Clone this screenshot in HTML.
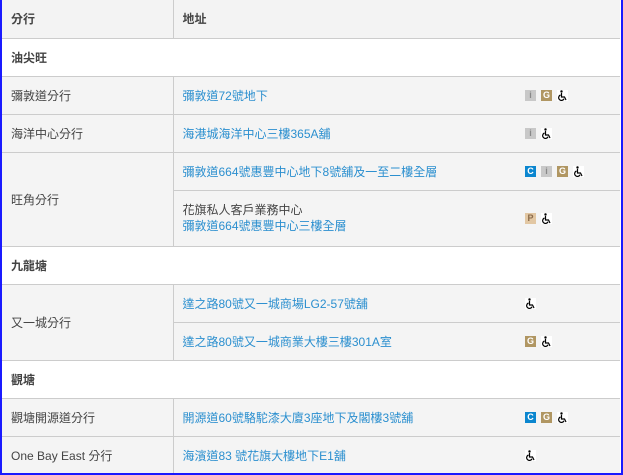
<!DOCTYPE html>
<html><head><meta charset="utf-8"><style>
*{margin:0;padding:0;box-sizing:border-box}
body{width:623px;height:475px;overflow:hidden;background:#fff;font-family:"Liberation Sans","Noto Sans CJK TC",sans-serif;font-size:12px;color:#444}
.frame{position:absolute;left:0;top:0;width:623px;height:475px;border:2px solid #1a1aff;border-top:none}
table{position:absolute;left:2px;top:0;width:618px;border-collapse:collapse;table-layout:fixed}
td,th{border-bottom:1px solid #ccc;padding:0 0 0 9px;text-align:left;vertical-align:middle}
th{background:#f3f3f3;font-weight:bold;height:38px}
tr.sec td{background:#fff;font-weight:bold;height:38px}
tr.r td{background:#f4f4f4;height:38px}
td.c1{border-right:1px solid #ccc}
a{color:#2b8fcf;text-decoration:none}
.ic{display:inline-block;width:11px;height:11px;margin-right:5px;vertical-align:middle;color:#fff;font-size:9px;font-weight:bold;text-align:center;line-height:11px}
.i{background:#c8c8c8;color:#888}.g{background:#b09662}.c{background:#0b86cf}.p{background:#e2c7a3;color:#8a6a4a}
svg.w{display:inline-block;width:11px;height:11px;vertical-align:middle;background:#fff;margin-right:5px}
</style></head><body>
<svg width="0" height="0" style="position:absolute"><defs><g id="wc"><circle cx="4.5" cy="1.5" r="1.2" fill="#000"/><path d="M4.5 3v4h3l1.5 3M3.5 5a2.8 2.8 0 1 0 3.5 3.8" stroke="#000" stroke-width="1.2" fill="none"/></g></defs></svg>
<table>
<colgroup><col style="width:171px"><col style="width:343px"><col></colgroup>
<tr><th class="c1" style="border-right:1px solid #ccc">分行</th><th colspan="2">地址</th></tr>
<tr class="sec"><td colspan="3">油尖旺</td></tr>
<tr class="r"><td class="c1">彌敦道分行</td><td><a>彌敦道72號地下</a></td><td><span class="ic i">i</span><span class="ic g">G</span><svg class="w" viewBox="0 0 11 11"><use href="#wc"/></svg></td></tr>
<tr class="r"><td class="c1">海洋中心分行</td><td><a>海港城海洋中心三樓365A舖</a></td><td><span class="ic i">i</span><svg class="w" viewBox="0 0 11 11"><use href="#wc"/></svg></td></tr>
<tr class="r"><td class="c1" rowspan="2">旺角分行</td><td><a>彌敦道664號惠豐中心地下8號舖及一至二樓全層</a></td><td><span class="ic c">C</span><span class="ic i">i</span><span class="ic g">G</span><svg class="w" viewBox="0 0 11 11"><use href="#wc"/></svg></td></tr>
<tr class="r"><td style="height:56px;line-height:16px">花旗私人客戶業務中心<br><a>彌敦道664號惠豐中心三樓全層</a></td><td><span class="ic p">P</span><svg class="w" viewBox="0 0 11 11"><use href="#wc"/></svg></td></tr>
<tr class="sec"><td colspan="3">九龍塘</td></tr>
<tr class="r"><td class="c1" rowspan="2">又一城分行</td><td><a>達之路80號又一城商場LG2-57號舖</a></td><td><svg class="w" viewBox="0 0 11 11"><use href="#wc"/></svg></td></tr>
<tr class="r"><td><a>達之路80號又一城商業大樓三樓301A室</a></td><td><span class="ic g">G</span><svg class="w" viewBox="0 0 11 11"><use href="#wc"/></svg></td></tr>
<tr class="sec"><td colspan="3">觀塘</td></tr>
<tr class="r"><td class="c1">觀塘開源道分行</td><td><a>開源道60號駱駝漆大廈3座地下及閣樓3號舖</a></td><td><span class="ic c">C</span><span class="ic g">G</span><svg class="w" viewBox="0 0 11 11"><use href="#wc"/></svg></td></tr>
<tr class="r"><td class="c1">One Bay East 分行</td><td><a>海濱道83 號花旗大樓地下E1舖</a></td><td><svg class="w" viewBox="0 0 11 11"><use href="#wc"/></svg></td></tr>
</table>
<div class="frame"></div>
</body></html>
